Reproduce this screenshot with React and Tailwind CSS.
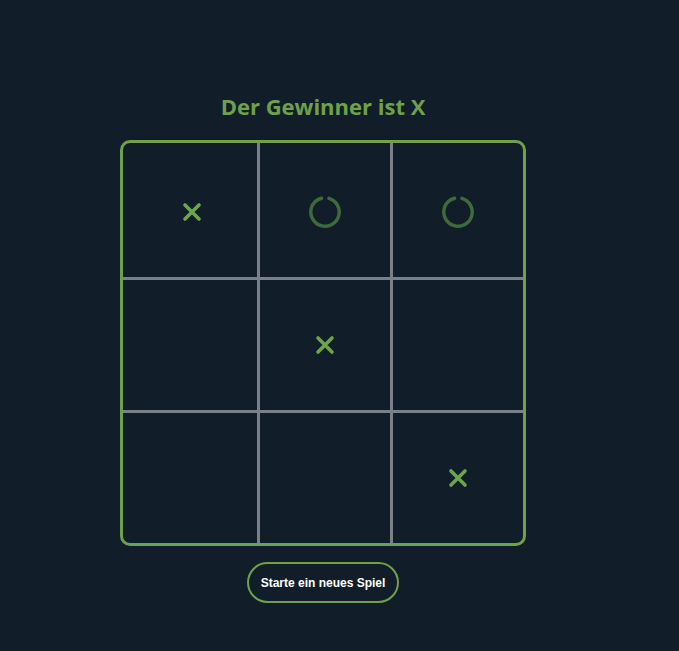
import React from 'react';

const board = ['X', 'O', 'O', '', 'X', '', '', '', 'X'];

const XMark = () => (
    <svg width="20" height="20" viewBox="0 0 20 20" fill="none">
        <path d="M3 3L17 17M17 3L3 17" stroke="#6da44c" strokeWidth="3.6" strokeLinecap="round" />
    </svg>
);

const OMark = () => (
    <svg width="34" height="34" viewBox="0 0 34 34" fill="none">
        <circle
            cx="17"
            cy="17"
            r="14.2"
            stroke="#3f6b3a"
            strokeWidth="3.4"
            strokeLinecap="round"
            strokeDasharray="81.2 8"
            transform="rotate(-74 17 17)"
        />
    </svg>
);

const App = () => {
    return (
        <div className="min-h-[651px] bg-[#111e29] font-['Open_Sans',sans-serif]">
            <div className="w-[646px] flex flex-col items-center pt-[89px]">
                <h1 className="text-[22px] font-bold text-[#6ea14a] leading-[34px] mb-[17px]">Der Gewinner ist X</h1>

                <div className="w-[406px] h-[406px] border-[3px] border-[#6ea14a] rounded-[10px] grid grid-cols-[137px_133px_130px] grid-rows-[137px_133px_130px]">
                    {board.map((cell, i) => (
                        <div
                            key={i}
                            className={`flex items-center justify-center border-[#7a8089] ${i % 3 !== 2 ? 'border-r-[3px]' : ''} ${i < 6 ? 'border-b-[3px]' : ''} ${i < 3 ? 'pt-[4px]' : ''} ${i === 0 ? 'pl-[3px]' : ''}`}
                        >
                            {cell === 'X' && <XMark />}
                            {cell === 'O' && <OMark />}
                        </div>
                    ))}
                </div>

                <button className="mt-[16px] w-[152px] h-[41px] rounded-full border-2 border-[#6ea14a] text-white text-[12px] font-bold font-['Liberation_Sans',Arial,sans-serif]">
                    Starte ein neues Spiel
                </button>
            </div>
        </div>
    );
};

export default App;
